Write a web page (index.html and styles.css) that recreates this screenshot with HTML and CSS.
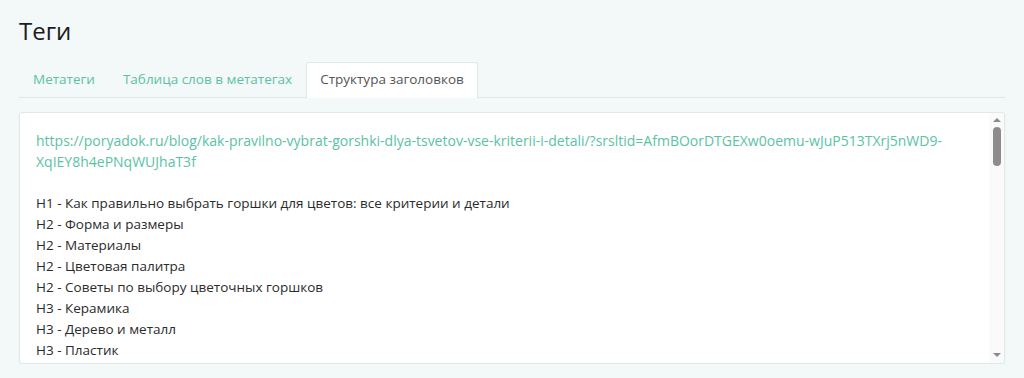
FILE: index.html
```html
<!DOCTYPE html>
<html lang="ru">
<head>
<meta charset="utf-8">
<title>Теги</title>
<link rel="stylesheet" href="styles.css">
</head>
<body>
<div class="page">
  <h1 class="title">Теги</h1>
  <ul class="tabs">
    <li class="tab"><a href="#">Метатеги</a></li>
    <li class="tab"><a href="#">Таблица слов в метатегах</a></li>
    <li class="tab active"><a href="#">Структура заголовков</a></li>
  </ul>
  <div class="panel">
    <div class="content">
      <a class="url" href="#">https://poryadok.ru/blog/kak-pravilno-vybrat-gorshki-dlya-tsvetov-vse-kriterii-i-detali/?srsltid=AfmBOorDTGEXw0oemu-wJuP513TXrj5nWD9-XqIEY8h4ePNqWUJhaT3f</a>
      <div class="gap"></div>
      <div class="line">Н1 - Как правильно выбрать горшки для цветов: все критерии и детали</div>
      <div class="line">Н2 - Форма и размеры</div>
      <div class="line">Н2 - Материалы</div>
      <div class="line">Н2 - Цветовая палитра</div>
      <div class="line">Н2 - Советы по выбору цветочных горшков</div>
      <div class="line">Н3 - Керамика</div>
      <div class="line">Н3 - Дерево и металл</div>
      <div class="line">Н3 - Пластик</div>
      <div class="line">Н3 - Стекло</div>
      <div class="line">Н3 - Бетон и камень</div>
      <div class="line">Н3 - Дренажные отверстия</div>
      <div class="line">Н3 - Поддоны</div>
      <div class="line">Н3 - Кашпо</div>
      <div class="line">Н3 - Подвесные горшки</div>
      <div class="line">Н3 - Напольные горшки</div>
      <div class="line">Н3 - Горшки для орхидей</div>
      <div class="line">Н3 - Горшки для кактусов</div>
      <div class="line">Н3 - Горшки для рассады</div>
      <div class="line">Н3 - Уход за горшками</div>
      <div class="line">Н4 - Популярные статьи</div>
      <div class="line">Н4 - Подпишитесь на рассылку</div>
      <div class="line">Н4 - Каталог</div>
      <div class="line">Н4 - Покупателям</div>
      <div class="line">Н4 - О компании</div>
      <div class="line">Н4 - Контакты</div>
      <div class="line">Н4 - Доставка и оплата</div>
      <div class="line">Н4 - Гарантия и возврат</div>
      <div class="line">Н4 - Акции</div>
      <div class="line">Н4 - Новинки</div>
      <div class="line">Н4 - Блог</div>
      <div class="line">Н4 - Хранение</div>
      <div class="line">Н4 - Кухня</div>
      <div class="line">Н4 - Ванная</div>
      <div class="line">Н4 - Гардероб</div>
      <div class="line">Н4 - Декор</div>
      <div class="line">Н4 - Сад и дача</div>
      <div class="line">Н4 - Текстиль</div>
      <div class="line">Н4 - Посуда</div>
      <div class="line">Н4 - Освещение</div>
      <div class="line">Н4 - Мебель</div>
      <div class="line">Н4 - Детская</div>
      <div class="line">Н4 - Офис</div>
      <div class="line">Н4 - Уборка</div>
      <div class="line">Н4 - Подарки</div>
      <div class="line">Н4 - Бренды</div>
      <div class="line">Н4 - Отзывы</div>
      <div class="line">Н4 - Магазины</div>
      <div class="line">Н4 - Вакансии</div>
      <div class="line">Н4 - Партнёрам</div>
      <div class="line">Н4 - Оптовым покупателям</div>
      <div class="line">Н4 - Корпоративным клиентам</div>
      <div class="line">Н4 - Вопросы и ответы</div>
      <div class="line">Н4 - Политика конфиденциальности</div>
      <div class="line">Н4 - Пользовательское соглашение</div>
      <div class="line">Н4 - Мы в социальных сетях</div>
      <div class="line">Н4 - Мобильное приложение</div>
      <div class="line">Н4 - Бонусная программа</div>
      <div class="line">Н4 - Подарочные сертификаты</div>
      <div class="line">Н4 - Сервис</div>
      <div class="line">Н4 - Помощь</div>
      <div class="line">Н4 - Личный кабинет</div>
      <div class="line">Н4 - Избранное</div>
      <div class="line">Н4 - Корзина</div>
    </div>
    <div class="scrollbar" aria-hidden="true">
      <span class="arrow up"></span>
      <span class="thumb"></span>
      <span class="arrow down"></span>
    </div>
  </div>
</div>
</body>
</html>
```

FILE: styles.css
```css
* { box-sizing: border-box; }
html, body {
  margin: 0;
  padding: 0;
  background: #f3f8f8;
}
body {
  font-family: "Open Sans", "Liberation Sans", sans-serif;
  font-size: 14px;
  line-height: 21px;
  color: #333;
}
.page {
  padding: 0 19px;
}
.title {
  margin: 15px 0 15px;
  font-size: 24px;
  line-height: 32px;
  font-weight: 400;
  color: #1c1c1c;
}
.tabs {
  display: flex;
  list-style: none;
  margin: 0;
  padding: 0;
  border-bottom: 1px solid #e1e8ea;
}
.tab {
  margin-bottom: -1px;
}
.tab a {
  display: block;
  height: 36px;
  padding: 6px 13px 7px;
  border: 1px solid transparent;
  border-bottom: 0;
  border-radius: 3px 3px 0 0;
  font-size: 13.5px;
  color: #5bc2a5;
  text-decoration: none;
}
.tab.active a {
  background: #fff;
  border-color: #e1e6e8;
  color: #555;
}
.panel {
  position: relative;
  margin-top: 14px;
  height: 252px;
  overflow: hidden;
  background: #fff;
  border: 1px solid #e3e7e9;
  border-radius: 3px;
  box-shadow: 0 1px 2px rgba(0, 0, 0, 0.05);
}
.content {
  padding: 17px 31px 0 16px;
  color: #2b2b2b;
  font-size: 13.5px;
}
.url {
  display: block;
  font-size: 14px;
  color: #5bc2a5;
  text-decoration: none;
}
.gap {
  height: 21px;
}
.scrollbar {
  position: absolute;
  top: 0;
  right: 0;
  bottom: 0;
  width: 15px;
  background: #fafafa;
}
.arrow {
  position: absolute;
  left: 4px;
  width: 0;
  height: 0;
  border-left: 4px solid transparent;
  border-right: 4px solid transparent;
}
.arrow.up {
  top: 5px;
  border-bottom: 4px solid #8a8a8a;
}
.arrow.down {
  bottom: 6px;
  border-top: 4px solid #8a8a8a;
}
.thumb {
  position: absolute;
  top: 14px;
  left: 4px;
  width: 8px;
  height: 39px;
  border-radius: 4px;
  background: #8c8c8c;
}
```
